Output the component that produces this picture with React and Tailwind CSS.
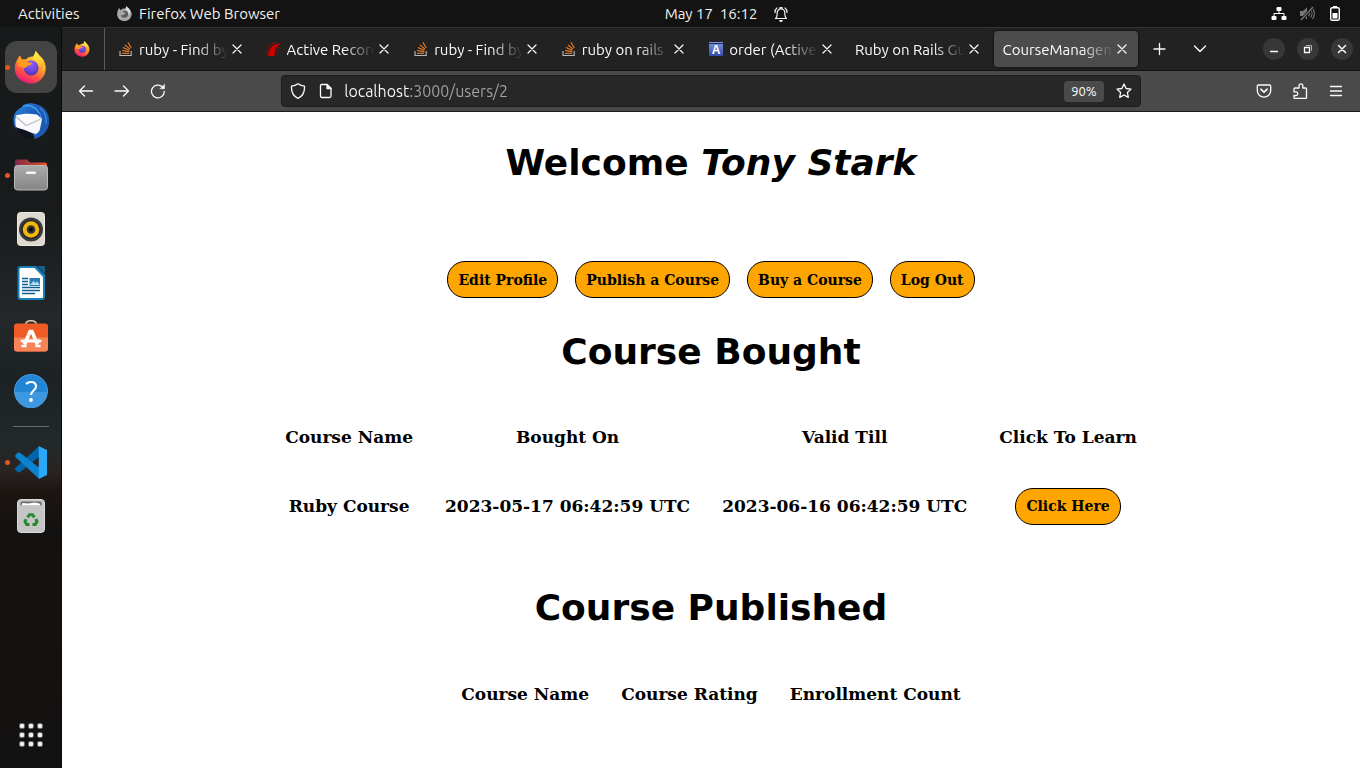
import React from "react";

function FirefoxLogo({ size, id }) {
  return (
    <svg width={size} height={size} viewBox="-0.5 0.5 32 32" aria-hidden="true">
      <defs>
        <linearGradient id={`${id}-body`} x1="0.85" y1="0.05" x2="0.3" y2="1">
          <stop offset="0" stopColor="#ffe83d" />
          <stop offset="0.35" stopColor="#ffa22b" />
          <stop offset="0.7" stopColor="#ff4b45" />
          <stop offset="1" stopColor="#e31587" />
        </linearGradient>
        <linearGradient id={`${id}-flame`} x1="0.5" y1="0" x2="0.7" y2="1">
          <stop offset="0" stopColor="#fff44f" />
          <stop offset="0.5" stopColor="#ffd12e" />
          <stop offset="1" stopColor="#ff7a2f" />
        </linearGradient>
        <radialGradient id={`${id}-globe`} cx="0.5" cy="0.25" r="0.8">
          <stop offset="0" stopColor="#9059ff" />
          <stop offset="0.6" stopColor="#6b45dd" />
          <stop offset="1" stopColor="#4a2f9f" />
        </radialGradient>
      </defs>
      <path
        d="M5.6 5.2C5.8 7 6.3 8.200 7 9c1.300-.5 2.800-.6 4.200-.3C14 5.500 19 5 22 7.500c4 1.500 6.500 4 8.200 7.500.9 8.500-4.700 17-14.200 17C7.400 32 .6 26 .3 18c-.1-4 .9-7 2.700-9.500.5-1.500 1.400-2.700 2.600-3.300z"
        fill={`url(#${id}-body)`}
      />
      <circle cx="16.200" cy="17" r="7.200" fill={`url(#${id}-globe)`} />
      <path
        d="M20.600 0c-.9 4-3.300 6-3.100 9 1.600-.3 4.500.6 5.700 3.400 1 2.600.9 5.600-.2 8 4-1.500 5.500-5 4.600-8.600 1 1 1.700 2.200 2.400 3.400C29.500 8.500 25.500 6.500 23.500 4 22.300 2.600 21.300 1.400 20.600 0z"
        fill={`url(#${id}-flame)`}
      />
      <path
        d="M5.600 5.200C6 7.200 6.700 8.400 8 9.200c2.600-.6 4 .7 5 2.200 1.300.4 2.800.4 4.200.4-.4 1.700-2.400 2.200-4 3-1.200.6-1.600 1.600-3.400 2.400-1-1.200-3.400-2-5.600-1.200C3 12.500 3 8 5.600 5.200z"
        fill="#ff9a1f"
      />
    </svg>
  );
}

function GreyFox() {
  return (
    <svg width="15" height="15" viewBox="0 0 32 32" aria-hidden="true">
      <path
        d="M5.600 4C6 7 6.500 8 8 8.500 12 5 16 5 18 6c0-3 1.300-4.500 2.600-6 .5 3 3.400 4.500 6 7 3.400 3.300 5 7 4.700 11C30.500 26 24 32 16 32 7.500 32 .5 26 .3 18 .2 12 2 6.500 5.600 4z"
        fill="#a8a8a8"
      />
      <path d="M16 10c5 0 8 3 8 7 0 5-4 8-8 8-4.500 0-8-3-8-6 3 2 6 0 8-2 2-1 3-2 2-3-3-.5-4-2-6-2 1-1 2-2 4-2z" fill="#5c5c5c" />
      <path d="M20.600 0c-1 4-2.600 5-2.400 8 5 1 7 6 5.800 11 5-3 5-9 2-13-2-2-4-3-5.400-6z" fill="#dedede" />
    </svg>
  );
}

function StackIcon() {
  return (
    <svg width="16" height="16" viewBox="0 0 16 16" fill="none" aria-hidden="true">
      <path d="M2 10v4.500h11.200V10" stroke="#bcbbbb" strokeWidth="1.100" />
      <g stroke="#f48024" strokeWidth="1.100">
        <path d="M4 12.300h7.200" />
        <path d="M4.100 9.500l7.100 1.100" />
        <path d="M4.900 6.600l6.600 2.600" />
        <path d="M6.900 3.800l5.200 4.400" />
        <path d="M9.900 1.200l3.400 5.800" />
      </g>
    </svg>
  );
}

function RailsIcon() {
  return (
    <svg width="16" height="16" viewBox="0 0 16 16" fill="#cc0000" aria-hidden="true">
      <path d="M2 15c.2-4.500 2-8.500 5.400-10.700C10 2.500 13 1.900 16 2.800c-1.600 0-3.600.9-4.900 2.700C9.200 8 8.400 11.500 8.600 15z" />
      <path d="M.2 12h1.300v1H.2zM.6 9l1.300.5-.3 1L.4 10zM2.200 6l1.200.8-.6.9-1.100-.8zM4.400 3.200l1 1.200-.8.7-.9-1.300zM7 1.500l.6 1.300-1 .5L6 1.900zM10.300.8l.2 1.300h-1L9.300.9zM10.600 8l1.300.4-.3 1-1.200-.4zM10.200 11l1.400.2v1h-1.300zM11.900 5.800l1 .7-.7.800-1-.8z" />
    </svg>
  );
}

function ApiDockIcon() {
  return (
    <svg width="14" height="14" viewBox="0 0 14 14" aria-hidden="true">
      <defs>
        <linearGradient id="dock-bg" x1="0" y1="0" x2="0" y2="1">
          <stop offset="0" stopColor="#8398d8" />
          <stop offset="1" stopColor="#3049b0" />
        </linearGradient>
      </defs>
      <rect width="14" height="14" fill="url(#dock-bg)" />
      <path d="M0 1.500h14" stroke="#1f2b66" />
      <text x="7" y="12" textAnchor="middle" fontFamily="Liberation Sans, sans-serif" fontWeight="bold" fontSize="12" fill="#fff">A</text>
    </svg>
  );
}

function Stroke({ size = 16, width = 1.3, children }) {
  return (
    <svg
      width={size}
      height={size}
      viewBox="0 0 16 16"
      fill="none"
      stroke="currentColor"
      strokeWidth={width}
      strokeLinecap="round"
      strokeLinejoin="round"
      aria-hidden="true"
    >
      {children}
    </svg>
  );
}

const tabs = [
  { title: "ruby - Find by name", icon: <StackIcon /> },
  { title: "Active Record Query", icon: <RailsIcon /> },
  { title: "ruby - Find by name", icon: <StackIcon /> },
  { title: "ruby on rails - order", icon: <StackIcon /> },
  { title: "order (ActiveRecord)", icon: <ApiDockIcon /> },
  { title: "Ruby on Rails Guides" },
  { title: "CourseManagement", active: true },
];

function Tab({ title, icon, active }) {
  return (
    <div
      className={`flex h-9 min-w-0 flex-1 items-center rounded pr-[7px] pl-2 ${
        active ? "bg-[#4c4c4c] shadow-[0_0_3px_rgba(0,0,0,0.7)]" : ""
      }`}
    >
      {icon && <span className="mr-1 flex w-[18px] shrink-0 justify-center">{icon}</span>}
      <button
        type="button"
        className="min-w-0 flex-1 overflow-hidden pt-0.5 text-left text-[15px] leading-5 whitespace-nowrap text-[#fbfbfe] [mask-image:linear-gradient(to_left,transparent,black_32px)]"
      >
        {title}
      </button>
      <button type="button" aria-label={`Close ${title}`} className="flex w-[18px] shrink-0 justify-center text-[#fbfbfe]">
        <Stroke width={1.2}>
          <path d="M4 4l8 8M12 4l-8 8" />
        </Stroke>
      </button>
    </div>
  );
}

function SystemBar() {
  return (
    <header className="grid h-[27px] shrink-0 grid-cols-[1fr_auto_1fr] items-center bg-[#131313] text-[15px] leading-5 text-[#f2f2f2]">
      <div className="flex items-center pl-[18px]">
        <button type="button" className="w-[99px] text-left">Activities</button>
        <button type="button" className="flex items-center gap-[7px]">
          <GreyFox />
          Firefox Web Browser
        </button>
      </div>
      <button type="button" className="flex items-center gap-4 whitespace-pre">
        <span className="w-[78px]" />
        <span>May 17  16:12</span>
        <Stroke width={1.2}>
          <path d="M2.500 12.500c1.500-1 1.700-3 1.700-5.500C4.200 4.500 5.800 3 8 3s3.800 1.500 3.800 4c0 2.500.2 4.500 1.700 5.500zM7 3V1.500h2V3M2 6.500C2 4.500 2.800 2.800 4 2M14 6.500C14 4.500 13.200 2.800 12 2" />
          <path d="M6.800 14.500a1.300 1.300 0 0 0 2.400 0z" fill="currentColor" />
        </Stroke>
      </button>
      <div className="flex items-center justify-end gap-3 pr-[17px]">
        <svg width="16" height="16" viewBox="0 0 16 16" fill="#fff" aria-label="Wired network">
          <rect x="5.500" y="1" width="5" height="4" rx="1" />
          <rect x="0.500" y="10" width="5" height="4" rx="1" />
          <rect x="10.500" y="10" width="5" height="4" rx="1" />
          <path d="M8 5v2.500M3 10V7.500h10V10" fill="none" stroke="#fff" />
        </svg>
        <svg width="16" height="16" viewBox="0 0 16 16" aria-label="Muted">
          <path d="M1 5h3L8 1.500v12L4 10H1z" fill="#777" />
          <path d="M9.500 5c1.300 1.500 1.300 3.500 0 5M11.500 3.500c2 2.300 2 5.700 0 8M13.500 2c2.400 3.500 2.400 7.500 0 11" fill="none" stroke="#777" strokeWidth="1.100" />
          <path d="M14 0.500L2 14.500" stroke="#131313" strokeWidth="3" />
          <path d="M14 1L2 14" stroke="#777" strokeWidth="1.300" />
        </svg>
        <svg width="16" height="16" viewBox="0 0 16 16" aria-label="Battery">
          <rect x="3.700" y="1.700" width="8.600" height="12.600" rx="1.600" fill="none" stroke="#fff" strokeWidth="1.400" />
          <path d="M6 0h4v1.500H6zM5.500 7h5v5.500h-5z" fill="#fff" />
        </svg>
      </div>
    </header>
  );
}

function Dot() {
  return <span className="absolute left-0 h-[5px] w-[5px] rounded-full bg-[#e95420]" />;
}

function Launcher({ label, running, active, children }) {
  return (
    <button
      type="button"
      aria-label={label}
      className={`relative flex h-[52px] w-[52px] items-center justify-center rounded-xl ${active ? "bg-[#444444]" : ""}`}
    >
      {running && <Dot />}
      {children}
    </button>
  );
}

function Dock() {
  return (
    <nav
      aria-label="Dock"
      className="flex w-[62px] shrink-0 flex-col items-center gap-0.5 border-r border-[#0b0b0b] bg-[linear-gradient(to_bottom,#171a1a_0,#181a1b_180px,#24282a_290px,#1c2224_350px,#22292b_415px,#2a2422_442px,#1d1512_465px,#141210_500px,#15110f_640px,#121212_741px)] pt-[14px]"
    >
      <Launcher label="Firefox" running active>
        <FirefoxLogo size={33} id="dock" />
      </Launcher>
      <Launcher label="Thunderbird">
        <svg width="36" height="36" viewBox="0 0 36 36" aria-hidden="true">
          <defs>
            <linearGradient id="tb" x1="0" y1="0" x2="1" y2="1">
              <stop offset="0" stopColor="#2f8fe8" />
              <stop offset="0.45" stopColor="#1b57b0" />
              <stop offset="1" stopColor="#2f72cf" />
            </linearGradient>
          </defs>
          <path d="M10 3C13 .3 17 0 20 .5 30 1.500 36 9 36 18c0 9-6 16-15 18C16 32 6 31 1.500 24-1 16 1 9 6 6c1-1 2.500-2 4-3z" fill="url(#tb)" />
          <path d="M10 3c5-2 13 1 16 7 3-1 2 4 2 7" fill="none" stroke="#3d9cf0" strokeWidth="1.600" />
          <path d="M3 12.500C9 10.500 17 10.500 24 11.500L29 16l-2.500 12L23 31 3.500 25.500C2 21 2 17 3 12.500z" fill="#fafafa" />
          <path d="M3.500 14l9.500 8.500L28 16" fill="none" stroke="#b8bfc8" strokeWidth="1.300" />
          <path d="M2.500 24C8 26 14 27 20 31l2 4.500C14 37 6 33 2.500 24z" fill="#101420" />
          <path d="M26 8c4 6 4 13 1 19-1 3-3 6-5 8.500C31 33 36 26 36 18c0-6-3-11-7-14z" fill="#1c59b2" />
          <path d="M27 5c5 4 7 10 6 16" fill="none" stroke="#3787dc" strokeWidth="1.400" />
        </svg>
      </Launcher>
      <Launcher label="Files" running>
        <svg width="34" height="32" viewBox="0 0.500 34 32" aria-hidden="true">
          <defs>
            <linearGradient id="fold" x1="0" x2="1">
              <stop offset="0" stopColor="#7c2949" />
              <stop offset="1" stopColor="#e95420" />
            </linearGradient>
            <linearGradient id="foldf" x1="0" y1="0" x2="0" y2="1">
              <stop offset="0" stopColor="#ababab" />
              <stop offset="1" stopColor="#858585" />
            </linearGradient>
          </defs>
          <path d="M1 3q0-2 2-2h10l3 3h15q2 0 2 2v8H1z" fill="url(#fold)" />
          <rect x="0.500" y="7" width="33" height="24.500" rx="3" fill="url(#foldf)" stroke="#b9b9b9" />
          <rect x="12" y="13" width="10" height="2.500" rx="1" fill="#f5f5f5" />
        </svg>
      </Launcher>
      <Launcher label="Rhythmbox">
        <svg width="28" height="34" viewBox="0 0 28 34" aria-hidden="true">
          <rect x="0.500" y="0.500" width="27" height="33" rx="3" fill="#ded9cf" stroke="#efebe4" />
          <circle cx="14" cy="17.500" r="12" fill="#3b3b3b" />
          <circle cx="14" cy="17.500" r="8.600" fill="none" stroke="#20242c" strokeWidth="2" />
          <circle cx="14" cy="17.500" r="8.300" fill="#f2b90c" />
          <circle cx="14" cy="17.500" r="4.300" fill="#343434" />
          <circle cx="14" cy="17.500" r="2" fill="#080808" />
        </svg>
      </Launcher>
      <Launcher label="LibreOffice Writer">
        <svg width="28" height="34" viewBox="0 0 28 34" aria-hidden="true">
          <path d="M3.500 0H19l9 9v22q0 3-3 3H3.500q-3 0-3-3V3q0-3 3-3z" fill="#1880b8" />
          <path d="M4 2h13.500L26 11v19.500q0 1.500-1.500 1.500H4q-1.500 0-1.500-1.500v-27Q2.500 2 4 2z" fill="#fff" />
          <path d="M20 0h8v8z" fill="#15608f" />
          <path d="M5 12.500h6M5 15.500h6M5 18.500h6M5 21.500h18M5 24.500h18M5 27.500h13" stroke="#0d5d91" strokeWidth="1.500" />
          <rect x="12.500" y="12" width="10.500" height="8" fill="#2c7db4" />
          <path d="M13 19l3.500-4 2 2 1.500-1.500 3 3.500z" fill="#b6dcf3" />
        </svg>
      </Launcher>
      <Launcher label="Ubuntu Software">
        <svg width="34" height="34" viewBox="0 2.500 34 34" aria-hidden="true">
          <path d="M11.500 8c0-2.500 1.500-4.800 5.500-4.800S22.500 5.500 22.500 8" fill="none" stroke="#d9c9a6" strokeWidth="1.500" />
          <rect y="6" width="34" height="28" rx="3" fill="#f05a24" />
          <path d="M0 20h34v11q0 3-3 3H3q-3 0-3-3z" fill="#f58557" />
          <path d="M10.500 27l5.500-13h2l5.500 13" fill="none" stroke="#fff" strokeWidth="3.600" />
          <path d="M8 23.500h18" stroke="#fff" strokeWidth="3" strokeLinecap="round" />
          <path d="M7.500 28.500h5M21.500 28.500h5" stroke="#fff" strokeWidth="2.400" />
        </svg>
      </Launcher>
      <Launcher label="Help">
        <svg width="34" height="34" viewBox="0 0 34 34" aria-hidden="true">
          <circle cx="17" cy="17" r="16.500" fill="#2285d6" stroke="#4a9fe3" />
          <path d="M.8 18h32.400A16.200 16.200 0 0 1 .8 18z" fill="#3e98df" />
          <path d="M12 10c1.500-1.500 3-2 5-2 3 0 5 1.700 5 4.500 0 4-5 4-5 8.500" fill="none" stroke="#fff" strokeWidth="2.200" />
          <circle cx="17" cy="26" r="1.900" fill="#fff" />
        </svg>
      </Launcher>
      <hr className="my-[7px] w-9 border-[#6d6d6d]" />
      <Launcher label="Visual Studio Code" running>
        <svg width="33" height="33" viewBox="-0.500 0 32 32" aria-hidden="true">
          <path d="M24 0v10.500L5.300 25.500l-2 .1-2.700-2.500.2-1.800z" fill="#0065a9" />
          <path d="M24 32V21L5.300 6.500l-2-.1L.6 8.900l.2 1.800z" fill="#0b83cf" />
          <path d="M23.500 9.500V0l8 3.800V28.200L23.500 32z" fill="#2ba8f5" />
        </svg>
      </Launcher>
      <Launcher label="Trash">
        <svg width="28" height="34" viewBox="0 0 28 34" aria-hidden="true">
          <rect x="0.500" y="0.500" width="27" height="33" rx="3.500" fill="#c5c5c5" stroke="#d9d9d9" />
          <path d="M3.500 6.500V4q0-1.500 1.500-1.500h18q1.500 0 1.500 1.500v2.500z" fill="#6e6e6e" />
          <path d="M4.500 6.500l1-2.500 6 .5 6-1 5 1 1 2z" fill="#fff" />
          <g fill="none" stroke="#26892c" strokeWidth="3">
            <path d="M10.500 18.500l2-2.800h3l1.800 2.600" />
            <path d="M18.700 20l1.300 2.500-1.700 3h-2.800" />
            <path d="M12.500 25.500H9.700l-1.700-3 1.300-2.300" />
          </g>
        </svg>
      </Launcher>
      <button type="button" aria-label="Show applications" className="mt-auto mb-[22px] grid grid-cols-3 gap-[5px]">
        {Array.from({ length: 9 }, (_, i) => (
          <span key={i} className="h-1 w-1 rounded-[1px] bg-[#f2f2f2] outline outline-[#f2f2f2]/40" />
        ))}
      </button>
    </nav>
  );
}

function TabStrip() {
  return (
    <div className="flex h-11 items-center border-t border-b border-t-[#333333] border-b-[#121212] bg-[#222222]">
      <button type="button" aria-label="Pinned tab" className="mr-1 flex w-[43px] shrink-0 items-center justify-center self-stretch border-r border-[#5c5c5c] pr-0.5">
        <FirefoxLogo size={16} id="pin" />
      </button>
      <div className="flex min-w-0 flex-1 gap-1">
        {tabs.map((tab, i) => (
          <Tab key={i} {...tab} />
        ))}
      </div>
      <div className="flex shrink-0 items-center pr-[7px] pl-0.5 text-[#fbfbfe]">
        <button type="button" aria-label="New tab" className="flex w-10 justify-center">
          <Stroke>
            <path d="M7.500 2.500v11M2 8h11" />
          </Stroke>
        </button>
        <button type="button" aria-label="List all tabs" className="mr-[43px] flex w-10 justify-center">
          <Stroke width={1.400}>
            <path d="M2.500 5L8 10.500 13.500 5" />
          </Stroke>
        </button>
        <div className="flex gap-3">
          <button type="button" aria-label="Minimise" className="flex h-[22px] w-[22px] items-center justify-center rounded-full bg-[#373737]">
            <Stroke>
              <path d="M4.500 10.500h7" />
            </Stroke>
          </button>
          <button type="button" aria-label="Restore" className="flex h-[22px] w-[22px] items-center justify-center rounded-full bg-[#373737]">
            <Stroke>
              <path d="M4.500 6.500h5v5h-5z" strokeLinejoin="miter" />
              <path d="M6.500 4.500h5v5" strokeWidth="1" opacity="0.600" />
            </Stroke>
          </button>
          <button type="button" aria-label="Close window" className="flex h-[22px] w-[22px] items-center justify-center rounded-full bg-[#373737]">
            <Stroke width={1.500}>
              <path d="M4.500 4.500l7 7M11.500 4.500l-7 7" />
            </Stroke>
          </button>
        </div>
      </div>
    </div>
  );
}

function ToolButton({ label, children }) {
  return (
    <button type="button" aria-label={label} className="flex w-9 justify-center text-[#fbfbfe]">
      <Stroke>{children}</Stroke>
    </button>
  );
}

function Toolbar() {
  return (
    <div className="flex h-[41px] items-center border-b border-[#1b1b1b] bg-[#4a4a4a] px-1.5">
      <ToolButton label="Back">
        <path d="M14.500 8H1.500M6.500 3l-5 5 5 5" />
      </ToolButton>
      <ToolButton label="Forward">
        <path d="M1 8h13.500M9.500 3l5 5-5 5" />
      </ToolButton>
      <ToolButton label="Reload">
        <path d="M14.300 8.500A6.400 6.400 0 1 1 12.500 4" />
        <path d="M14.500 1.500v4.300h-4.300z" fill="currentColor" strokeWidth="0.500" />
      </ToolButton>
      <div className="flex-1" />
      <div className="flex h-8 flex-[8] items-center rounded border border-[#1b1b1b] bg-[#272727] px-2 text-[#fbfbfe]">
        <Stroke>
          <path d="M8 .8c2 1.500 4 2.200 6.500 2.400C14.800 8.500 13 13 8 15.300 3 13 1.200 8.500 1.500 3.200 4 3 6 2.300 8 .8z" />
        </Stroke>
        <span className="mr-2.5 ml-3 flex">
          <Stroke>
            <path d="M3.500 1.500H9l4 4V13q0 1.500-1.500 1.500h-7Q2.500 14.500 2.500 13V3q0-1.500 1-1.500z" />
            <path d="M9 1.500V5.500h4z" fill="currentColor" />
          </Stroke>
        </span>
        <input
          type="text"
          aria-label="Address"
          defaultValue="localhost:3000/users/2"
          className="min-w-0 flex-1 bg-[linear-gradient(to_right,#fbfbfe_66px,#a3a3a5_66px)] bg-clip-text text-base leading-5 text-transparent caret-white outline-none"
        />
        <button type="button" className="mr-3 h-[21px] rounded-sm bg-[#4a4a4a] px-[7px] text-[13px] leading-4">90%</button>
        <button type="button" aria-label="Bookmark this page">
          <Stroke>
            <path d="M8 1l2.100 4.500 4.900.6-3.600 3.400.9 4.900L8 12l-4.300 2.400.9-4.900L1 6.100l4.900-.6z" />
          </Stroke>
        </button>
      </div>
      <div className="flex-1" />
      <ToolButton label="Save to Pocket">
        <path d="M2.500 2h11q1.200 0 1.200 1.200V7.500A6.600 6.600 0 0 1 1.300 7.500V3.200Q1.300 2 2.500 2z" />
        <path d="M4.800 6.200L8 9.200l3.200-3" strokeWidth="1.600" />
      </ToolButton>
      <ToolButton label="Extensions">
        <path d="M3 5h4V2.800a1.900 1.900 0 0 1 3.800 0V5h2.700q1 0 1 1v8.500q0 1-1 1H3q-1 0-1-1v-2h2a1.800 1.800 0 0 0 0-3.600H2V6q0-1 1-1z" />
      </ToolButton>
      <ToolButton label="Menu">
        <path d="M2.500 3.500h11M2.500 8h11M2.500 12.500h11" />
      </ToolButton>
    </div>
  );
}

function Heading({ children }) {
  return <h1 className="font-['DejaVu_Sans',sans-serif] text-4xl leading-[42px] font-bold">{children}</h1>;
}

function Pill({ children }) {
  return (
    <button
      type="button"
      className="h-[37px] rounded-[18px] border border-black bg-[#ffa500] px-2.5 font-['DejaVu_Serif',serif] text-sm font-bold whitespace-nowrap"
    >
      {children}
    </button>
  );
}

function HeaderCell({ children }) {
  return <th scope="col" className="px-4 pb-[30px]">{children}</th>;
}

function Cell({ children }) {
  return <td className="px-4">{children}</td>;
}

function ProfilePage() {
  return (
    <main className="flex flex-1 flex-col items-center bg-white pt-[30px] pb-6 text-center font-['DejaVu_Serif',serif] text-black">
      <Heading>
        Welcome <em>Tony Stark</em>
      </Heading>
      <div className="mt-[77px] flex gap-[17px]">
        <Pill>Edit Profile</Pill>
        <Pill>Publish a Course</Pill>
        <Pill>Buy a Course</Pill>
        <Pill>Log Out</Pill>
      </div>
      <div className="mt-[33px]">
        <Heading>Course Bought</Heading>
      </div>
      <table className="mt-[54px] text-[17px] leading-5 font-bold">
        <thead>
          <tr>
            <HeaderCell>Course Name</HeaderCell>
            <HeaderCell>Bought On</HeaderCell>
            <HeaderCell>Valid Till</HeaderCell>
            <HeaderCell>Click To Learn</HeaderCell>
          </tr>
        </thead>
        <tbody>
          <tr className="h-[58px]">
            <Cell>Ruby Course</Cell>
            <Cell>2023-05-17 06:42:59 UTC</Cell>
            <Cell>2023-06-16 06:42:59 UTC</Cell>
            <Cell>
              <Pill>Click Here</Pill>
            </Cell>
          </tr>
        </tbody>
      </table>
      <div className="mt-[52px]">
        <Heading>Course Published</Heading>
      </div>
      <table className="mt-[55px] text-[17px] leading-5 font-bold">
        <thead>
          <tr>
            <HeaderCell>Course Name</HeaderCell>
            <HeaderCell>Course Rating</HeaderCell>
            <HeaderCell>Enrollment Count</HeaderCell>
          </tr>
        </thead>
      </table>
    </main>
  );
}

export default function App() {
  return (
    <div className="flex min-h-screen flex-col bg-[#131313] font-['Ubuntu','Noto_Sans',sans-serif]">
      <SystemBar />
      <div className="flex flex-1">
        <Dock />
        <div className="flex min-w-0 flex-1 flex-col">
          <TabStrip />
          <Toolbar />
          <ProfilePage />
        </div>
      </div>
    </div>
  );
}
